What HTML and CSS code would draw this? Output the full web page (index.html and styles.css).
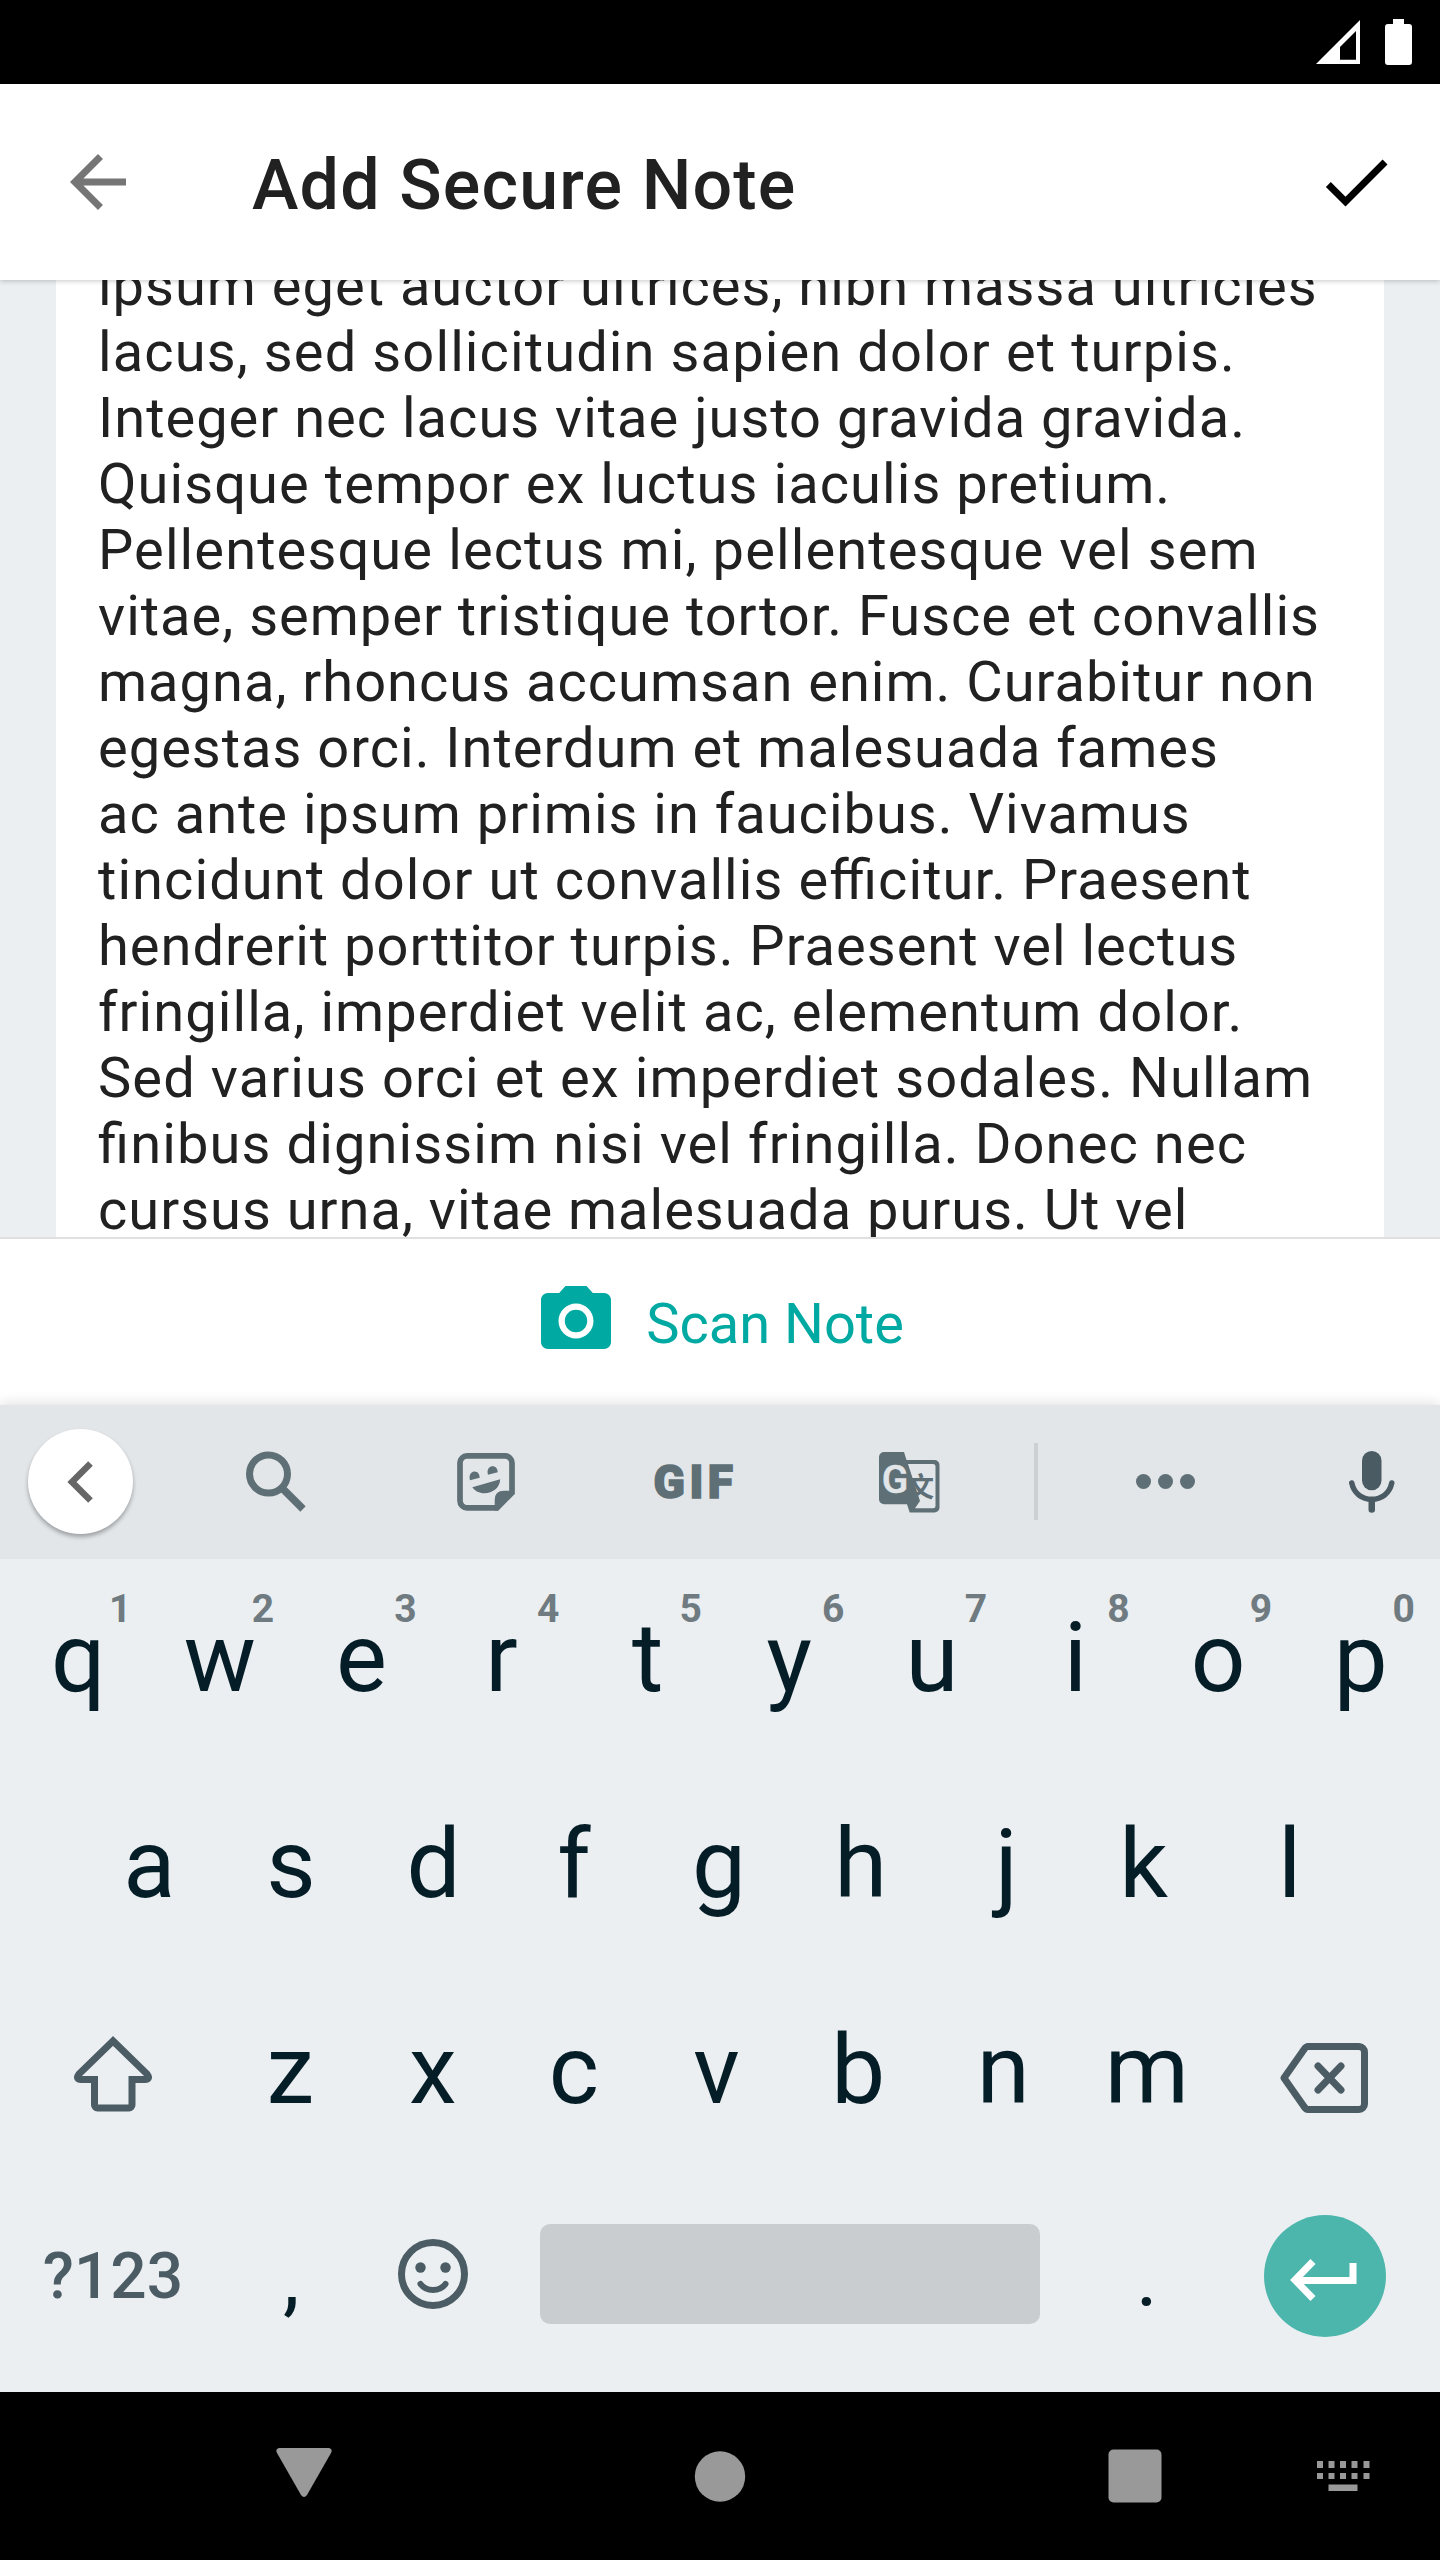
FILE: index.html
```
<!DOCTYPE html>
<html lang="en">
<head>
<meta charset="utf-8">
<title>Add Secure Note</title>
<link rel="stylesheet" href="styles.css">
</head>
<body>
<div class="screen">
  <div class="status-bar">
    <svg class="signal" viewBox="0 0 44 44"><path fill="#fff" fill-rule="evenodd" d="M44 0V44H0ZM40 11L24 27V39.700H40Z"/></svg>
    <svg class="battery" viewBox="0 0 27 46"><path fill="#fff" d="M8 0h11v5h5a3 3 0 0 1 3 3v35a3 3 0 0 1-3 3H3a3 3 0 0 1-3-3V8a3 3 0 0 1 3-3h5z"/></svg>
  </div>

  <header class="app-bar">
    <svg class="back" viewBox="0 0 24 24"><path fill="#757575" d="M20 11H7.83l5.59-5.59L12 4l-8 8 8 8 1.41-1.41L7.83 13H20v-2z"/></svg>
    <h1 class="title">Add Secure Note</h1>
    <svg class="done" viewBox="0 0 24 24"><path d="M9 16.2L4.8 12l-1.4 1.4L9 19 21 7l-1.4-1.4L9 16.2z"/></svg>
  </header>

  <main class="content">
    <p class="note">ipsum eget auctor ultrices, nibh massa ultricies<br><span class="looser">lacus, sed sollicitudin sapien dolor et turpis.</span><br>Integer nec lacus vitae justo gravida gravida.<br><span class="loose">Quisque tempor ex luctus iaculis pretium.</span><br><span class="looser">Pellentesque lectus mi, pellentesque vel sem</span><br>vitae, semper tristique tortor. Fusce et convallis<br>magna, rhoncus accumsan enim. Curabitur non<br>egestas orci. Interdum et malesuada fames<br>ac ante ipsum primis in faucibus. Vivamus<br><span class="loose">tincidunt dolor ut convallis efficitur. Praesent</span><br>hendrerit porttitor turpis. Praesent vel lectus<br><span class="loose">fringilla, imperdiet velit ac, elementum dolor.</span><br><span class="looser">Sed varius orci et ex imperdiet sodales. Nullam</span><br><span class="looser">finibus dignissim nisi vel fringilla. Donec nec</span><br>cursus urna, vitae malesuada purus. Ut vel</p>
  </main>

  <div class="scan">
    <svg class="camera" viewBox="0 0 24 24"><circle cx="12" cy="12" r="3.2"/><path d="M9 2L7.17 4H4c-1.1 0-2 .9-2 2v12c0 1.1.9 2 2 2h16c1.1 0 2-.9 2-2V6c0-1.100-.9-2-2-2h-3.170L15 2H9zm3 15c-2.760 0-5-2.240-5-5s2.240-5 5-5 5 2.240 5 5-2.240 5-5 5z"/></svg>
    <span>Scan Note</span>
  </div>

  <section class="keyboard">
    <div class="tools">
      <div class="tool collapse"><span class="disc"><svg viewBox="0 0 26 42"><path fill="none" stroke="#666" stroke-width="6.500" d="M23.500 2.500L5 21l18.500 18.500"/></svg></span></div>
      <div class="tool search"><svg viewBox="0 0 60 61"><circle cx="22.500" cy="23" r="19" fill="none" stroke="#5f6f76" stroke-width="7"/><path stroke="#5f6f76" stroke-width="7.500" d="M36 37L57 58"/></svg></div>
      <div class="tool sticker"><svg viewBox="0 0 58 58"><path fill="none" stroke="#5f6f76" stroke-width="5.700" d="M10 2.850H48a7 7 0 0 1 7 7V39.500L40 54.800H10a7 7 0 0 1-7-7V9.850a7 7 0 0 1 7-7z"/><path fill="#5f6f76" d="M57.800 40.700L41 57.500H37.700V47q0-9.300 9.300-9.300H55zM15.300 34.300L43.200 26.300C43 35 35.500 40.300 27.500 40.300 22 40.300 18 38 15.300 34.300zM13 27.300C11.500 22.500 14 18.500 17.500 18.500 21 18.500 22.700 21.500 22.700 24.700zM31 21.800C29.500 17 32 13.300 35.500 13.300 39 13.300 40.700 16 40.700 19.200z"/></svg></div>
      <div class="tool gif">GIF</div>
      <div class="tool translate"><svg viewBox="0 0 61 61"><path fill="#5f6f76" fill-rule="evenodd" d="M5 0H25L27.500 8H55.500a5 5 0 0 1 5 5V55.500a5 5 0 0 1-5 5H30.700L28 52.300H5a5 5 0 0 1-5-5V5a5 5 0 0 1 5-5zM29 12L41 49 36 56.300H54a2.500 2.500 0 0 0 2.500-2.500V14.500a2.500 2.500 0 0 0-2.500-2.500z"/><text class="latin" x="16" y="40.800">G</text><text class="han" x="41.500" y="45">文</text></svg></div>
      <span class="rule"></span>
      <div class="tool more"><svg viewBox="0 0 59 15"><g fill="#5f6f76"><circle cx="7.500" cy="7.500" r="7.500"/><circle cx="29.500" cy="7.500" r="7.500"/><circle cx="51.500" cy="7.500" r="7.500"/></g></svg></div>
      <div class="tool mic"><svg viewBox="0 0 46 62"><rect x="13" width="19.500" height="39.300" rx="9.750" fill="#4a5b63"/><path fill="none" stroke="#4a5b63" stroke-width="5.500" stroke-linecap="round" d="M2.750 32C5 42.500 13 48.300 22.750 48.300S40.500 42.500 42.750 32"/><path stroke="#4a5b63" stroke-width="6.500" stroke-linecap="round" d="M22.750 50V58.400"/></svg></div>
    </div>

    <div class="row">
      <span class="key right1">q<i>1</i></span><span class="key">w<i>2</i></span><span class="key left1">e<i>3</i></span><span class="key left3">r<i>4</i></span><span class="key">t<i>5</i></span><span class="key left1">y<i>6</i></span><span class="key left1">u<i>7</i></span><span class="key">i<i>8</i></span><span class="key">o<i>9</i></span><span class="key">p<i>0</i></span>
    </div>
    <div class="row home">
      <span class="key right1">a</span><span class="key">s</span><span class="key">d</span><span class="key left2">f</span><span class="key">g</span><span class="key left1">h</span><span class="key right2">j</span><span class="key left3">k</span><span class="key">l</span>
    </div>
    <div class="row">
      <span class="key wide"><svg class="shift" viewBox="0 0 78 76"><path fill="none" stroke="#4b5c64" stroke-width="7" d="M39 5L5 38c-3 4-1 5.500 2 5.500H20.500V69a3 3 0 0 0 3 3H55a3 3 0 0 0 3-3V43.500H71c3 0 5-1.500 2-5.500z"/></svg></span><span class="key left1">z</span><span class="key left1">x</span><span class="key left2">c</span><span class="key left2">v</span><span class="key left3">b</span><span class="key left1">n</span><span class="key">m</span><span class="key wide"><svg class="delete" viewBox="0 0 88 70"><path fill="none" stroke="#4b5c64" stroke-width="7" stroke-linejoin="round" d="M28 3.500H79a5.500 5.500 0 0 1 5.500 5.500V61a5.500 5.500 0 0 1-5.500 5.500H28q-2 0-4-3L4 35 24 6.500q2-3 4-3z"/><path stroke="#4b5c64" stroke-width="7" stroke-linecap="round" d="M38 23L61 47M61 23L38 47"/></svg></span>
    </div>
    <div class="row">
      <span class="key wide symbols">?123</span><span class="key punct">,</span><span class="key"><svg class="emoji" viewBox="0 0 70 70"><circle cx="35" cy="35" r="31.500" fill="none" stroke="#4b5c64" stroke-width="7"/><circle cx="22.500" cy="28.500" r="5.200" fill="#4b5c64"/><circle cx="47.500" cy="28.500" r="5.200" fill="#4b5c64"/><path fill="none" stroke="#4b5c64" stroke-width="6" stroke-linecap="round" d="M22.500 45Q27 51 35 51T47.500 45"/></svg></span><span class="key space"><span class="bar"></span></span><span class="key punct">.</span><span class="key wide"><span class="enter"><svg viewBox="0 0 67 42"><path fill="none" stroke="#fff" stroke-width="7" d="M63 4V21.500H5M23 2.500L5 21l18 18.500"/></svg></span></span>
    </div>
  </section>

  <nav class="nav-bar">
    <svg class="nav-icons" viewBox="0 0 1440 168"><g fill="#999"><path d="M279 56H329q4 1 2 5L307 103q-3 4-6 0L277 61q-2-4 2-5z"/><circle cx="720" cy="84.500" r="25.200"/><rect x="1108.500" y="57.500" width="53" height="53" rx="5"/><path d="M1317 69h6v7h-6zM1328.500 69h6v7h-6zM1340 69h6v7h-6zM1351.500 69h6v7h-6zM1363.500 69h6v7h-6zM1317 81h6v6h-6zM1328.500 81h6v6h-6zM1340 81h6v6h-6zM1351.500 81h6v6h-6zM1363.500 81h6v6h-6zM1328.500 92.500h29v6.500h-29z"/></g></svg>
  </nav>
</div>
</body>
</html>
```
FILE: styles.css
```
* { box-sizing: border-box; }
body { margin: 0; font-family: Roboto, "Liberation Sans", sans-serif; }
svg { display: block; flex: none; }
.screen { width: 1440px; height: 2560px; display: flex; flex-direction: column; overflow: hidden; background: #ebeff2; }

.status-bar { height: 84px; flex: none; background: #000; display: flex; justify-content: flex-end; padding: 19px 28px 0 0; gap: 25px; }
.signal { width: 44px; height: 44px; margin-top: 1px; }
.battery { width: 27px; height: 46px; }

.app-bar { height: 196px; flex: none; background: #fff; display: flex; align-items: center; padding: 0 42px 0 56px; position: relative; z-index: 1; box-shadow: 0 1px 5px rgba(0, 0, 0, .22); }
.back { width: 84px; height: 84px; }
.title { margin: 5px auto 0 112px; font-size: 70px; font-weight: 500; line-height: 82px; letter-spacing: 1.150px; color: #212121; white-space: nowrap; }
.done { width: 84px; height: 84px; }

.content { height: 957px; flex: none; padding: 0 56px; overflow: hidden; }
.note { margin: -27px 0 0; height: 984px; padding-left: 42px; background: #fff; color: #212121; font-size: 56px; line-height: 66px; letter-spacing: 1px; font-feature-settings: "liga" 1; white-space: nowrap; }
.loose { letter-spacing: 1.070px; }
.looser { letter-spacing: 1.110px; }

.scan { height: 168px; flex: none; background: #fff; border-top: 2px solid #dfe0e1; display: flex; justify-content: center; padding: 40px 2px 0 0; color: #00a9a1; font-size: 56px; line-height: 66px; gap: 28px; }
.scan svg { width: 84px; height: 84px; fill: #00a9a1; }
.scan span { margin-top: 12px; }

.keyboard { height: 987px; flex: none; position: relative; box-shadow: 0 -2px 12px rgba(0, 0, 0, .12); background: #ebeff2; }
.tools { height: 154px; padding-bottom: 1px; background: #e2e6e9; display: grid; grid-template-columns: 161px 230px 189px 228px 202px 52px 206px 172px; align-items: center; justify-items: center; }
.disc { width: 105px; height: 105px; border-radius: 50%; background: #fff; box-shadow: 0 3px 4px rgba(0, 0, 0, .3); display: flex; align-items: center; justify-content: center; padding-right: 2px; }
.disc svg { width: 26px; height: 42px; }
.search svg { width: 60px; height: 61px; }
.sticker svg { width: 58px; height: 58px; }
.gif { font-size: 46px; line-height: 56px; font-weight: 900; letter-spacing: 4.500px; color: #5f6f76; padding-left: 3px; -webkit-text-stroke: 1.500px #5f6f76; }
.translate svg { width: 61px; height: 61px; margin-top: 2px; }
.translate text { text-anchor: middle; }
.latin { font: 500 39px Roboto, sans-serif; fill: #e2e6e9; stroke: #e2e6e9; stroke-width: .5px; }
.han { font: 700 27px "Noto Sans CJK SC", sans-serif; fill: #5f6f76; }
.rule { width: 4px; height: 77px; background: #cbd0d3; }
.more svg { width: 59px; height: 15px; }
.mic svg { width: 46px; height: 62px; margin-left: 36px; }

.row { height: 206px; display: flex; padding: 0 8px 0 6px; }
.row.home { padding: 0 79px 0 77px; }
.key { flex: 1 1 0; min-width: 0; position: relative; display: flex; justify-content: center; font-size: 96px; line-height: 112px; padding-top: 43px; color: #051d27; }
.key i { position: absolute; left: 50%; margin-left: 23px; width: 40px; text-align: center; text-indent: 0; top: 27px; font: 700 39px/46px Roboto, sans-serif; color: #6f7b81; }
/* Optical centring: half of the indent becomes the sideways shift of the letter. */
.left1 { text-indent: -2px; }
.left2 { text-indent: -5px; }
.left3 { text-indent: -7px; }
.right1 { text-indent: 2px; }
.right2 { text-indent: 4px; }
.wide { flex-grow: 1.5; }
.shift { width: 78px; height: 76px; margin-top: 22px; }
.delete { width: 88px; height: 70px; margin: 29px 3px 0 0; }
.emoji { width: 70px; height: 70px; margin: 19px 2px 0 0; }
.symbols { font-size: 64px; line-height: 76px; padding-top: 62px; color: #4b5c64; font-weight: 500; }
.punct { font-size: 84px; padding-top: 45px; }
.space { flex-grow: 4; }
.bar { width: 500px; height: 100px; flex: none; margin: 4px 1px 0 0; border-radius: 10px; background: #c9cdd0; }
.enter { width: 122px; height: 122px; border-radius: 50%; background: #4db6ac; display: flex; align-items: center; justify-content: center; margin-top: -5px; padding: 8px 4px 0 0; }
.enter svg { width: 67px; height: 42px; }

.nav-bar { height: 168px; flex: none; background: #000; }
.nav-icons { width: 1440px; height: 168px; }
```
